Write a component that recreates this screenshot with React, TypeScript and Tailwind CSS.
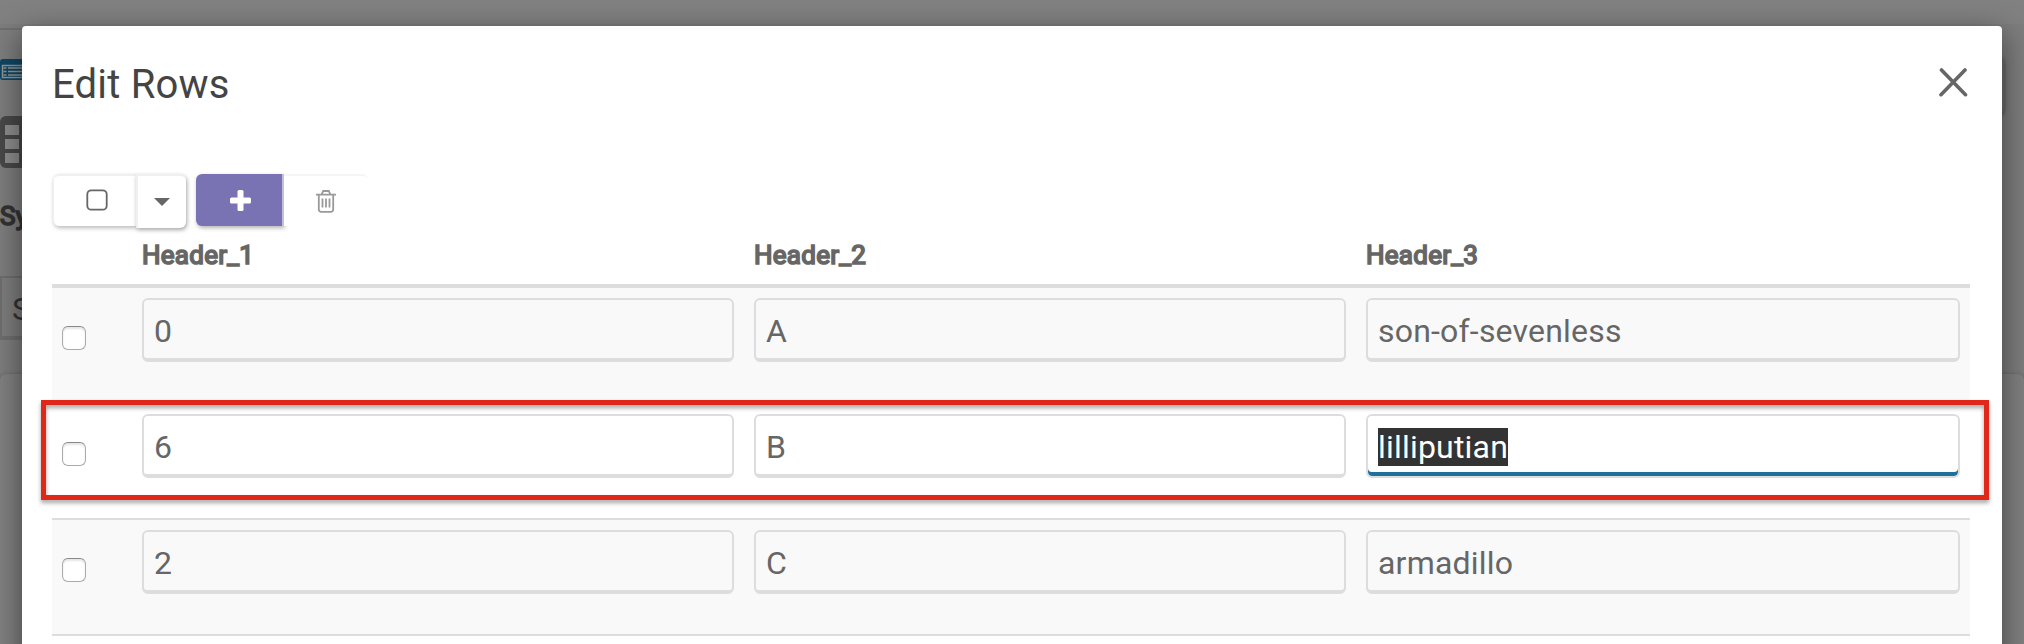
import React from "react";

type Row = { values: [string, string, string]; focused?: boolean };

const headers = ["Header_1", "Header_2", "Header_3"];
const rows: Row[] = [
  { values: ["0", "A", "son-of-sevenless"] },
  { values: ["6", "B", "lilliputian"], focused: true },
  { values: ["2", "C", "armadillo"] },
  { values: ["", "", ""] },
];

function Backdrop() {
  return (
    <div className="absolute inset-0 overflow-hidden bg-[#7d7d7d]">
      <div className="absolute inset-x-0 top-0 h-6 bg-[#818181]" />
      <div className="absolute left-0 top-7 h-0.5 w-8 bg-[#6f6f6f]" />
      <svg className="absolute left-0 top-[59px]" width="40" height="21" viewBox="0 0 40 21">
        <rect width="40" height="21" rx="3" fill="#0f4664" />
        <rect x="2.5" y="6.5" width="36" height="12" fill="none" stroke="#949494" strokeWidth="1.5" />
        <path d="M3.500 9h3M3.500 12.500h3M3.500 16h3M8 9h30M8 12.500h30M8 16h30" stroke="#949494" strokeWidth="1.500" />
      </svg>
      <svg className="absolute left-0 top-[116px]" width="40" height="52" viewBox="0 0 40 52">
        <rect width="40" height="52" rx="6" fill="#484848" />
        <path d="M5 9h14v10H5zM5 23h14v10H5zM5 37h14v10H5z" fill="#8c8c8c" />
      </svg>
      <div className="absolute left-0 top-[200px] text-[26px] leading-8 text-[#333] tracking-[0.3px] [-webkit-text-stroke:1.7px_#333]">Sy</div>
      <div className="absolute left-0 top-[276px] h-16 w-10 border-2 border-b-4 border-[#6e6e6e] pl-2.5 pt-[13px] text-[32px] leading-9 text-[#333]">S</div>
      <div className="absolute left-0 right-0 top-[374px] h-[300px] rounded-md bg-[#808080] shadow-[0_0_4px_rgba(0,0,0,0.2)]" />
      <div className="absolute left-[1960px] top-[56px] h-[58px] w-11 rounded-md bg-[#707070] shadow-[0_2px_4px_rgba(0,0,0,0.4)]" />
    </div>
  );
}

function Toolbar() {
  return (
    <div className="flex items-start pl-px">
      <button className="flex h-[52px] w-[83px] items-center justify-center rounded-l-md border-t-2 border-l border-[#f0f0f0] bg-white shadow-[1px_2px_4px_rgba(0,0,0,0.28)]">
        <svg className="mb-0.5 ml-1" width="22" height="22" viewBox="0 0 22 22" fill="none" stroke="#666" strokeWidth="1.8">
          <rect x="1.300" y="1.300" width="19.400" height="19.400" rx="4" />
        </svg>
      </button>
      <button className="flex h-[54px] w-[50px] items-center justify-center rounded-r-md border-t-2 border-l-2 border-[#f0f0f0] bg-white shadow-[1px_2px_4px_rgba(0,0,0,0.35)]">
        <svg className="mb-px" width="16" height="8" viewBox="0 0 16 8">
          <path d="M0 0h16L8 8z" fill="#666" />
        </svg>
      </button>
      <button className="ml-2.5 flex h-[52px] w-[88px] items-center justify-center rounded-l-md border-r-2 border-[#c4c0dc] bg-[#7972b3] shadow-[1px_2px_4px_rgba(0,0,0,0.3)]">
        <svg className="ml-[3px]" width="21" height="21" viewBox="0 0 21 21">
          <rect x="7.500" y="0" width="6" height="21" rx="1.500" fill="#fff" />
          <rect x="0" y="7.500" width="21" height="6" rx="1.500" fill="#fff" />
        </svg>
      </button>
      <button className="flex h-[52px] w-[84px] items-center justify-center rounded-tr-md border-t-2 border-[#f5f5f5] bg-white">
        <svg width="20" height="23" viewBox="0 0 20 23" fill="none" stroke="#999" strokeWidth="1.800">
          <path d="M0 4.600h20M5.800 4.200L7.200 1h5.600l1.400 3.200M2.800 5v14.500a2.400 2.400 0 0 0 2.400 2.400h9.600a2.400 2.400 0 0 0 2.400-2.400V5M6.500 8.500v9M10 8.500v9M13.500 8.500v9" />
        </svg>
      </button>
    </div>
  );
}

export default function App() {
  return (
    <div className="relative h-[644px] w-[2024px] overflow-hidden font-[Roboto,sans-serif]">
      <Backdrop />
      <div className="relative mx-[22px] mt-[26px] h-[700px] rounded-[4px] bg-white px-[30px] shadow-[0_8px_30px_rgba(0,0,0,0.5)]">
        <header className="flex h-[148px] items-start justify-between pt-[35px] pr-[4px]">
          <h1 className="text-[40px] leading-[48px] tracking-[0.2px] text-[#444]">Edit Rows</h1>
          <button className="mt-[7px]" aria-label="Close">
            <svg width="29" height="29" viewBox="0 0 29 29" fill="none" stroke="#666" strokeWidth="3.600" strokeLinecap="round">
              <path d="M2.500 2l24 24.700M26 2L2 26.700" />
            </svg>
          </button>
        </header>
        <Toolbar />
        <div className="flex h-[58px] w-[1918px] items-start border-b-2 border-[#ddd] pl-[90px] text-[26px] leading-8 tracking-[0.25px] text-[#666] [-webkit-text-stroke:1.7px_#666]">
          {headers.map((h) => (
            <div key={h} className="w-[612px] shrink-0 pt-[11px] last:w-auto">{h}</div>
          ))}
        </div>
        {rows.map((row, i) => (
          <div
            key={i}
            className={`grid h-[116px] w-[1918px] grid-cols-[80px_612px_612px_614px] border-t-2 border-[#ddd] ${i % 2 === 0 ? "bg-[#f9f9f9]" : "bg-white"}`}
          >
            <div className="pt-[38px] pl-2.5">
              <div className="size-6 rounded-[6px] border border-[#aaa] border-t-[#888] bg-white shadow-[inset_0_2px_2px_rgba(0,0,0,0.1)]" />
            </div>
            {row.values.map((v, c) => {
              const focus = row.focused && c === 2;
              return (
                <div key={c} className="px-2.5 pt-2.5">
                  <div
                    className={`flex h-16 items-start rounded-[6px] border-2 border-[#ddd] pt-[12px] pl-2.5 text-[32px] leading-[38px] tracking-[0.2px] text-[#666] ${focus ? "shadow-[inset_0_-4px_0_#1f719b]" : "border-b-4"}`}
                  >
                    {focus ? <span className="bg-[#333] text-white">{v}</span> : v}
                  </div>
                </div>
              );
            })}
          </div>
        ))}
      </div>
      <div className="pointer-events-none absolute left-[41px] top-[400px] h-[100px] w-[1948px] border-[5px] border-[#e12717] drop-shadow-[0_3px_2px_rgba(0,0,0,0.35)]" />
    </div>
  );
}
